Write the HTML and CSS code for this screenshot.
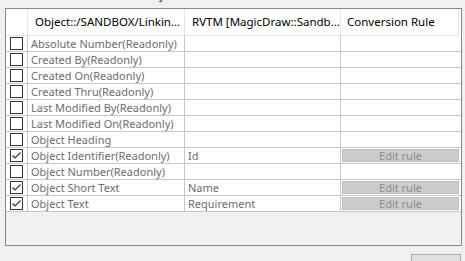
FILE: index.html
```html
<!DOCTYPE html>
<html lang="en">
<head>
    <meta charset="UTF-8">
    <title>Attribute Mapping</title>
    <link rel="stylesheet" href="styles.css">
</head>
<body>
    <div class="caption"><span>Attribute Summary</span></div>

    <div class="grid">
        <div class="row head">
            <div class="cell corner"></div>
            <div class="cell">Object::/SANDBOX/Linkin…</div>
            <div class="cell">RVTM [MagicDraw::Sandb…</div>
            <div class="cell">Conversion Rule</div>
        </div>

        <div class="row">
            <div class="cell box"><span class="check"></span></div>
            <div class="cell">Absolute Number(Readonly)</div>
            <div class="cell"></div>
            <div class="cell"></div>
        </div>
        <div class="row">
            <div class="cell box"><span class="check"></span></div>
            <div class="cell">Created By(Readonly)</div>
            <div class="cell"></div>
            <div class="cell"></div>
        </div>
        <div class="row">
            <div class="cell box"><span class="check"></span></div>
            <div class="cell">Created On(Readonly)</div>
            <div class="cell"></div>
            <div class="cell"></div>
        </div>
        <div class="row">
            <div class="cell box"><span class="check"></span></div>
            <div class="cell">Created Thru(Readonly)</div>
            <div class="cell"></div>
            <div class="cell"></div>
        </div>
        <div class="row">
            <div class="cell box"><span class="check"></span></div>
            <div class="cell">Last Modified By(Readonly)</div>
            <div class="cell"></div>
            <div class="cell"></div>
        </div>
        <div class="row">
            <div class="cell box"><span class="check"></span></div>
            <div class="cell">Last Modified On(Readonly)</div>
            <div class="cell"></div>
            <div class="cell"></div>
        </div>
        <div class="row">
            <div class="cell box"><span class="check"></span></div>
            <div class="cell">Object Heading</div>
            <div class="cell"></div>
            <div class="cell"></div>
        </div>
        <div class="row">
            <div class="cell box"><span class="check checked"><svg viewBox="0 0 11 11"><path d="M1.5 5.5 L4 8 L9.5 2.5"/></svg></span></div>
            <div class="cell">Object Identifier(Readonly)</div>
            <div class="cell">Id</div>
            <div class="cell"><span class="rule-btn">Edit rule</span></div>
        </div>
        <div class="row">
            <div class="cell box"><span class="check"></span></div>
            <div class="cell">Object Number(Readonly)</div>
            <div class="cell"></div>
            <div class="cell"></div>
        </div>
        <div class="row">
            <div class="cell box"><span class="check checked"><svg viewBox="0 0 11 11"><path d="M1.5 5.5 L4 8 L9.5 2.5"/></svg></span></div>
            <div class="cell">Object Short Text</div>
            <div class="cell">Name</div>
            <div class="cell"><span class="rule-btn">Edit rule</span></div>
        </div>
        <div class="row">
            <div class="cell box"><span class="check checked"><svg viewBox="0 0 11 11"><path d="M1.5 5.5 L4 8 L9.5 2.5"/></svg></span></div>
            <div class="cell">Object Text</div>
            <div class="cell">Requirement</div>
            <div class="cell"><span class="rule-btn">Edit rule</span></div>
        </div>
    </div>

    <div class="footer">
        <span class="btn"></span>
    </div>
</body>
</html>
```

FILE: styles.css
```css
* {
    margin: 0;
    padding: 0;
    box-sizing: border-box;
}

body {
    font-family: "Noto Sans", "Open Sans", sans-serif;
    font-size: 11px;
    background: #f0f0f0;
    color: #6d6d6d;
    width: 465px;
    height: 261px;
    overflow: hidden;
}

/* group title sits above the visible area, only its descender shows */
.caption {
    height: 8px;
    overflow: hidden;
    position: relative;
}

.caption span {
    position: absolute;
    left: 66px;
    top: -13px;
    color: #000;
    line-height: 16px;
}

.grid {
    margin-left: 5px;
    width: 457px;
    height: 238px;
    border: 1px solid #828790;
    background: #f0f0f0;
}

.row {
    display: grid;
    grid-template-columns: 22px 157px 156px 1fr;
    height: 16px;
    background: #fff;
}

.cell {
    border-right: 1px solid #c6c6c6;
    border-bottom: 1px solid #c6c6c6;
    padding-left: 3px;
    line-height: 15px;
    white-space: nowrap;
    overflow: hidden;
}

.cell:last-child {
    border-right: none;
    padding: 1px 2px 1px 1px;
}

.head {
    height: 27px;
}

.head .cell {
    color: #000;
    padding-left: 7px;
    line-height: 26px;
    font-size: 11.5px;
    border-right-color: #e5e5e5;
    border-bottom-color: #e5e5e5;
}

.head .cell:last-child {
    padding: 0 0 0 6px;
    margin-right: 2px;
    border-right: 1px solid #e5e5e5;
}

.head .corner {
    padding: 0;
}

.box {
    padding: 1px 0 0 4px;
}

.check {
    display: block;
    width: 13px;
    height: 13px;
    border: 1px solid #333;
    background: #fff;
}

.check svg {
    display: block;
    width: 11px;
    height: 11px;
}

.check path {
    fill: none;
    stroke: #333;
    stroke-width: 1.2;
}

.rule-btn {
    display: block;
    height: 13px;
    line-height: 12px;
    background: #cccccc;
    border: 1px solid #bdbdbd;
    color: #8d8d8d;
    text-align: center;
}

.footer {
    display: flex;
    justify-content: flex-end;
    padding: 8px 4px 0 0;
}

.btn {
    width: 50px;
    height: 20px;
    background: #e1e1e1;
    border: 1px solid #adadad;
}
```
